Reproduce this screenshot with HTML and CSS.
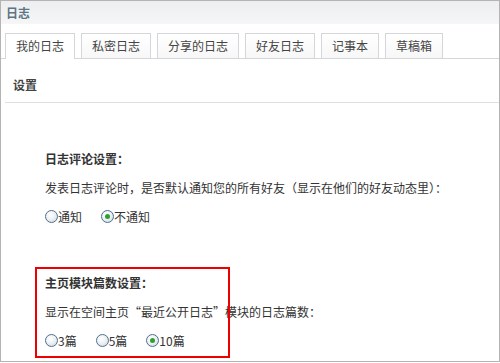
FILE: index.html
```html
<!DOCTYPE html>
<html lang="zh-CN">
<head>
    <meta charset="UTF-8">
    <meta name="viewport" content="width=device-width, initial-scale=1.0">
    <title>日志</title>
    <link rel="stylesheet" href="styles.css">
</head>
<body>
    <div class="panel">
        <div class="panel-head">日志</div>

        <ul class="tabs">
            <li class="tab active">我的日志</li>
            <li class="tab">私密日志</li>
            <li class="tab">分享的日志</li>
            <li class="tab">好友日志</li>
            <li class="tab">记事本</li>
            <li class="tab">草稿箱</li>
        </ul>

        <div class="bar">设置</div>

        <div class="section first">
            <div class="row title">日志评论设置：</div>
            <div class="row">发表日志评论时，是否默认通知您的所有好友（显示在他们的好友动态里）：</div>
            <div class="row options">
                <label class="option"><span class="radio"></span>通知</label>
                <label class="option"><span class="radio checked"></span>不通知</label>
            </div>
        </div>

        <div class="section marked">
            <div class="row title">主页模块篇数设置：</div>
            <div class="row">显示在空间主页“最近公开日志”模块的日志篇数：</div>
            <div class="row options">
                <label class="option"><span class="radio"></span>3篇</label>
                <label class="option"><span class="radio"></span>5篇</label>
                <label class="option"><span class="radio checked"></span>10篇</label>
            </div>
        </div>
    </div>
</body>
</html>
```

FILE: styles.css
```css
* {
    margin: 0;
    padding: 0;
    box-sizing: border-box;
}

body {
    font-family: "Noto Sans CJK SC", "DejaVu Sans", sans-serif;
    font-size: 12px;
    color: #333;
    background: #fff;
}

.panel {
    width: 500px;
    height: 362px;
    border: 1px solid #b4b4b4;
}

.panel-head {
    height: 23px;
    line-height: 23px;
    padding-left: 5px;
    font-weight: bold;
    color: #5d7483;
    background: linear-gradient(#eceef0, #f6f6f7);
}

.tabs {
    list-style: none;
    display: flex;
    margin-top: 9px;
    padding-left: 4px;
    border-bottom: 1px solid #d3d7da;
}

.tab {
    height: 25px;
    line-height: 24px;
    margin-right: 6px;
    margin-bottom: -1px;
    padding: 0 10px 0 10px;
    border: 1px solid #d3d7da;
    border-bottom: none;
    color: #444;
    background: linear-gradient(#fff, #f7f7f7);
}

.tab.active {
    height: 26px;
    background: #fff;
}

.bar {
    margin-left: 4px;
    height: 44px;
    padding: 17px 0 0 8px;
    font-weight: bold;
    color: #444;
    border-bottom: 1px solid #e0e0e0;
}

.section {
    padding-left: 44px;
}

.section.first {
    padding-top: 41px;
}

.section.marked {
    position: relative;
    margin-top: 37px;
}

/* 红框标注 */
.section.marked::after {
    content: "";
    position: absolute;
    top: -1px;
    left: 34px;
    width: 191px;
    height: 87px;
    border: 2px solid #ee0000;
}

.row {
    height: 29px;
    line-height: 29px;
    white-space: nowrap;
}

.title {
    font-weight: bold;
}

.options {
    display: flex;
    align-items: center;
}

.option {
    display: flex;
    align-items: center;
    margin-right: 19px;
}

.radio {
    width: 13px;
    height: 13px;
    border-radius: 50%;
    border: 1px solid #4f6f8f;
    background: radial-gradient(circle at 40% 35%, #fff 0%, #eef2f5 45%, #c9d3dc 100%);
    display: flex;
    justify-content: center;
    align-items: center;
}

.radio.checked::before {
    content: "";
    width: 5px;
    height: 5px;
    border-radius: 50%;
    background: #2fa02f;
}
```
